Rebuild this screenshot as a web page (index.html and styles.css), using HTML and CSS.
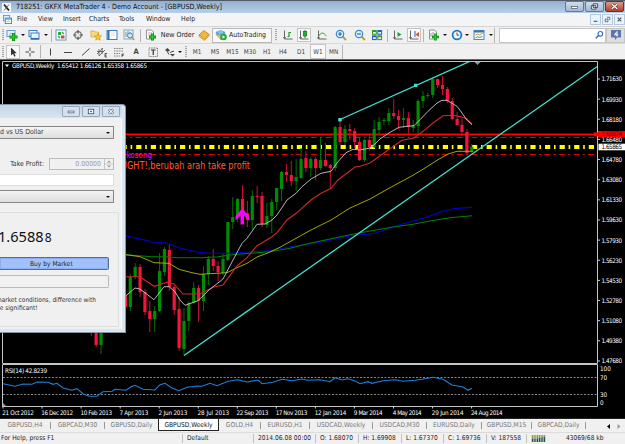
FILE: index.html
```html
<!DOCTYPE html>
<html lang="en">
<head>
  <meta charset="UTF-8">
  <title>GKFX MetaTrader 4</title>
  <link rel="stylesheet" href="styles.css">
</head>
<body>

<header class="titlebar">
  <svg class="app-icon" viewBox="0 0 9 9"><rect width="9" height="9" fill="#f8f8f8"/><path d="M2 1.5 L7 7.5" stroke="#222" stroke-width="1.8"/><path d="M7 1.5 L2 7.5" stroke="#444" stroke-width=".8"/></svg>
  <span class="title">718251: GKFX MetaTrader 4 - Demo Account - [GBPUSD,Weekly]</span>
  <div class="win-buttons">
    <span class="win-btn"><svg viewBox="0 0 18 10"><rect x="5.500" y="5" width="7" height="2" fill="#fff" stroke="#445" stroke-width=".7"/></svg></span>
    <span class="win-btn"><svg viewBox="0 0 18 10"><path d="M7.500 2h5v4h-5z M5.500 4h5v4h-5z" fill="#e8eef6" stroke="#445" stroke-width="1"/></svg></span>
    <span class="win-btn close"><svg viewBox="0 0 18 10"><path d="M6 2.500l6 5M12 2.500l-6 5" stroke="#533" stroke-width="3"/><path d="M6 2.500l6 5M12 2.500l-6 5" stroke="#fff" stroke-width="1.600"/></svg></span>
  </div>
</header>

<nav class="menubar">
  <svg class="menu-icon" viewBox="0 0 10 10"><rect x=".5" y=".5" width="7" height="6" fill="#dceefb" stroke="#5b9bd0"/><rect x="2.500" y="3.500" width="7" height="6" fill="#fff" stroke="#3f86c4"/><path d="M2.500 4.500h7" stroke="#3f86c4"/><path d="M4 7.500l2-1 2 1" stroke="#5a9" fill="none" stroke-width=".8"/></svg>
  <span>File</span><span>View</span><span>Insert</span><span>Charts</span><span>Tools</span><span>Window</span><span>Help</span>
  <div class="mdi-buttons">
    <span><svg viewBox="0 0 10 10"><path d="M3 7h4" stroke="#456" stroke-width="1.200"/></svg></span>
    <span><svg viewBox="0 0 10 10"><path d="M4.500 2.500h3v3M2.500 4.500h3v3h-3z" fill="none" stroke="#456" stroke-width=".9"/></svg></span>
    <span><svg viewBox="0 0 10 10"><path d="M3 3l4 4M7 3l-4 4" stroke="#456" stroke-width="1.200"/></svg></span>
  </div>
</nav>

<div class="toolbar main-tools">
  <i class="grip"></i>
  <svg viewBox="0 0 12 12"><rect x="1" y="1.500" width="8" height="6" fill="#e6f2fb" stroke="#5a9ccc"/><path d="M3 6l2-2 2 1" stroke="#888" fill="none" stroke-width=".7"/><path d="M7.500 4v8M3.500 8h8" stroke="#0a8a0a" stroke-width="3"/><path d="M7.500 4.600v6.800M4.200 8h6.600" stroke="#1fce2b" stroke-width="1.500"/></svg>
  <b class="arrow"></b>
  <svg viewBox="0 0 12 12"><rect x="1" y="1.500" width="8" height="6" fill="#f2f8fd" stroke="#3d7fbe"/><rect x="3" y="4" width="8" height="6" fill="#e4f0fa" stroke="#3d7fbe"/><path d="M3 9.800h8" stroke="#2d69a8" stroke-width="1.500"/></svg>
  <b class="arrow"></b>
  <i class="sep"></i>
  <svg viewBox="0 0 12 12"><rect x="1" y="1" width="10" height="10" fill="#fff" stroke="#5b9bd0"/><path d="M3 3h3v3h-3z" fill="#2fa838"/><path d="M6 6.500h3.500v3h-3.500z" fill="#e3432d"/><path d="M7 3l2 2M3 7l2 2" stroke="#2fa838" stroke-width="1.300"/></svg>
  <svg viewBox="0 0 12 12"><circle cx="6" cy="6" r="3.300" fill="none" stroke="#777" stroke-width="1.200"/><path d="M6 1v3.500M6 7.500v3.500M1 6h3.500M7.500 6h3.500" stroke="#555" stroke-width="1.200"/></svg>
  <svg viewBox="0 0 12 12"><path d="M1 2h3l1 1h3.500v5h-7.500z" fill="#f9dc79" stroke="#d2a02b" stroke-width=".7"/><path d="M8 4.500l1 2.300 2.600.2-2 1.600.7 2.600-2.300-1.400-2.300 1.400.7-2.600-2-1.600 2.600-.2z" fill="#fccc38" stroke="#c08a18" stroke-width=".6"/></svg>
  <svg viewBox="0 0 12 12"><rect x="1" y="1.500" width="10" height="9" fill="#fff" stroke="#3d7fbe"/><path d="M2.500 2v8" stroke="#2d6ab0" stroke-width="2"/><path d="M5 4h4M5 6h4" stroke="#f0c6a8" stroke-width=".7"/></svg>
  <svg viewBox="0 0 12 12"><rect x="1" y="1" width="9" height="9" fill="#e8f1f8" stroke="#8ab"/><path d="M3 3v5M5 2v5M7 3v3" stroke="#687" stroke-width=".8"/><circle cx="7" cy="6.500" r="2.500" fill="#cfe4f5" stroke="#4785bb"/><path d="M9 8.500l2.200 2.600" stroke="#c79a2b" stroke-width="1.500"/></svg>
  <i class="sep"></i>
  <svg viewBox="0 0 12 12"><path d="M1.500 1h5l2 2v7h-7z" fill="#fff" stroke="#777" stroke-width=".8"/><path d="M3 4h4M3 6h3" stroke="#999" stroke-width=".7"/><path d="M7.500 4.500v7M4 8h7" stroke="#0a8a0a" stroke-width="3"/><path d="M7.500 5v6M4.600 8h5.800" stroke="#1fce2b" stroke-width="1.400"/></svg>
  <span class="label">New Order</span>
  <svg viewBox="0 0 12 12"><path d="M1 6l5-4.500 5 4-4.500 5z" fill="#f4b93a" stroke="#b97a13" stroke-width=".8"/><path d="M1 6v1.500l5.500 4 4.500-4.500v-1.500l-4.500 5z" fill="#fff3c9" stroke="#b97a13" stroke-width=".6"/></svg>
  <span class="auto-btn">
    <svg viewBox="0 0 12 12"><path d="M1 5.500l5 5.500 4-4z" fill="#f2c84a" stroke="#b98b23" stroke-width=".5"/><ellipse cx="5.500" cy="4" rx="4.800" ry="2.200" fill="#5ba8d8"/><ellipse cx="5.500" cy="3" rx="2.600" ry="2" fill="#85c4e8"/><circle cx="8.500" cy="8" r="3.300" fill="#23a83c"/><path d="M7.500 6.300v3.400l2.700-1.700z" fill="#fff"/></svg>
    <span>AutoTrading</span>
  </span>
  <i class="grip"></i>
  <svg viewBox="0 0 12 12"><path d="M2.500 1.500v8.500h8M1 8.800h3" fill="none" stroke="#666"/><path d="M7 8V3M5.500 7.500h1.500M7 3.500h2" stroke="#1e9a2c" stroke-width="1.200"/></svg>
  <svg class="pressed" viewBox="0 0 12 12"><path d="M2.500 1.500v8.500h8M1 8.800h3" fill="none" stroke="#666"/><path d="M7 1v8" stroke="#168a24"/><rect x="5.300" y="2.500" width="3.400" height="4.500" fill="#23ad35" stroke="#0c7a1a" stroke-width=".7"/></svg>
  <svg viewBox="0 0 12 12"><path d="M2.500 1.500v8.500h8M1 8.800h3" fill="none" stroke="#666"/><path d="M2.500 7.500C5 3 7 3 10.500 7" fill="none" stroke="#3a9c46"/></svg>
  <svg viewBox="0 0 12 12"><path d="M7.500 7.500l3.500 3.500" stroke="#c99a25" stroke-width="2"/><circle cx="5" cy="5" r="3.700" fill="#d8effd" stroke="#3d8cc9" stroke-width="1.200"/><path d="M5 3v4M3 5h4" stroke="#2271b5" stroke-width="1.200"/></svg>
  <svg viewBox="0 0 12 12"><path d="M7.500 7.500l3.500 3.500" stroke="#c99a25" stroke-width="2"/><circle cx="5" cy="5" r="3.700" fill="#d8effd" stroke="#3d8cc9" stroke-width="1.200"/><path d="M3 5h4" stroke="#2271b5" stroke-width="1.200"/></svg>
  <svg viewBox="0 0 12 12"><rect x="1" y="1" width="4.800" height="4.800" fill="#2f9e2f"/><rect x="6.300" y="1" width="4.800" height="4.800" fill="#2c63bd"/><rect x="1" y="6.300" width="4.800" height="4.800" fill="#2c63bd"/><rect x="6.300" y="6.300" width="4.800" height="4.800" fill="#2f9e2f"/><path d="M2 3h2.800v1.800h-2.800zM7.300 3h2.800v1.800h-2.800zM2 8.300h2.800v1.800h-2.800zM7.300 8.300h2.800v1.800h-2.800z" fill="#e8f5ea"/></svg>
  <i class="sep"></i>
  <svg viewBox="0 0 12 12"><path d="M2.500 1.500v8.500h8M1 8.800h3" fill="none" stroke="#666"/><path d="M5.500 3v5l4-2.500z" fill="#1fa330"/></svg>
  <svg class="pressed" viewBox="0 0 12 12"><path d="M2.500 1.500v8.500h8M1 8.800h3" fill="none" stroke="#666"/><path d="M7 2v6" stroke="#2c63bd"/><path d="M11 3v5l-3.500-2.500z" fill="#d0502c"/></svg>
  <i class="sep"></i>
  <svg viewBox="0 0 12 12"><path d="M1.500 1h5l2 2v7h-7z" fill="#fff" stroke="#777" stroke-width=".8"/><path d="M3 4v4M5 3v4" stroke="#777" stroke-width=".8"/><path d="M7.500 4.500v7M4 8h7" stroke="#0a8a0a" stroke-width="2.600"/><path d="M7.500 5v6M4.600 8h5.800" stroke="#1fce2b" stroke-width="1.200"/></svg>
  <b class="arrow"></b>
  <svg viewBox="0 0 12 12"><circle cx="6" cy="6" r="4.400" fill="#eff8ff" stroke="#2478c8" stroke-width="1.800"/><path d="M6 3.500v2.700h2.200" fill="none" stroke="#444" stroke-width=".9"/></svg>
  <b class="arrow"></b>
  <svg viewBox="0 0 12 12"><rect x="1" y="1.500" width="10" height="9" fill="#f2f8fc" stroke="#4b8ac0"/><path d="M1 2.500h10" stroke="#3776b5" stroke-width="2"/><path d="M2.500 6l2-1 2 .8 3-1.300" fill="none" stroke="#d08a30" stroke-width=".9"/><path d="M2.500 8.800l2-1 2 .6 3-.9" fill="none" stroke="#3a9c46" stroke-width=".9"/></svg>
  <b class="arrow"></b>
  <i class="end"></i>
  <div class="search"><svg viewBox="0 0 12 12"><circle cx="7" cy="4.500" r="2.800" fill="#fff" stroke="#3c68c0" stroke-width="1.300"/><path d="M5 6.500l-3.500 3.500" stroke="#3c68c0" stroke-width="1.800"/></svg></div>
  <div class="chat"><svg viewBox="0 0 12 12"><path d="M1 1h10v7.500h-4l-1.500 2.500-1-2.500h-3.500z" fill="#5a76ac"/><path d="M7 7.500V2.500L4.500 5.800h3.700" stroke="#fff" fill="none"/></svg></div>
</div>

<div class="toolbar line-tools">
  <i class="grip"></i>
  <svg class="pressed" viewBox="0 0 12 12"><path d="M4 1.500v8l2-1.800 1.300 3 1.300-.6-1.300-2.900h2.500z" fill="#333"/></svg>
  <svg viewBox="0 0 12 12"><path d="M6 1.500v3.500M6 7v3.500M1.500 6h3.500M7 6h3.500" stroke="#444"/></svg>
  <i class="sep"></i>
  <svg viewBox="0 0 12 12"><path d="M6.500 2.500v7" stroke="#444"/></svg>
  <svg viewBox="0 0 12 12"><path d="M2 6.500h8" stroke="#444"/></svg>
  <svg viewBox="0 0 12 12"><path d="M2 9.500l7.500-7" stroke="#444"/></svg>
  <svg viewBox="0 0 12 12"><path d="M1 8l6-6M3 10l6-6M1 5.500h7M3 3v7M6 2v6" stroke="#555" stroke-width=".8"/><path d="M11 7.500H9v3.500h2M9 9.200h1.600" stroke="#333" fill="none" stroke-width=".8"/></svg>
  <svg viewBox="0 0 12 12"><path d="M1 2.500h9M1 5h9M1 7.500h6M1 10h6" stroke="#777" stroke-dasharray="1 .6"/><path d="M9 11V8h2M9 9.500h1.500" stroke="#333" fill="none" stroke-width=".8"/></svg>
  <span class="tool-a">A</span>
  <svg viewBox="0 0 12 12"><rect x="2" y="2" width="8.500" height="8.500" fill="none" stroke="#777" stroke-dasharray="1 .7"/><path d="M4 4h4.500M6.250 4v5" stroke="#333" stroke-width="1.200"/></svg>
  <svg viewBox="0 0 12 12"><path d="M1 4l2.500-2L6 4.500 3.500 6zM6 8h5l-2.500 2.500z" fill="#444"/><path d="M3.500 6l1.500 2.500M6 6.500l4-1.500" stroke="#444"/></svg>
  <b class="arrow"></b>
  <i class="grip"></i>
  <span>M1</span><span>M5</span><span>M15</span><span>M30</span><span>H1</span><span>H4</span><span>D1</span><span class="pressed">W1</span><span class="last">MN</span>
</div>

<main class="workspace">
  <svg id="chart" class="chart" viewBox="0 59 625 359">
    <defs><clipPath id="plot"><rect x="3" y="62" width="594.500" height="301"/></clipPath></defs>
    <path d="M0 59.500H625" stroke="#666"/>
    <g clip-path="url(#plot)">
      <path d="M121 134.300H598" stroke="#f00" stroke-width="1.800"/>
      <path d="M121 137.500H598M121 154.500H598" class="dashdot"/>
      <path d="M121.600 147H598" class="bid"/>
      <g id="candles"></g>
      <g id="averages"></g>
      <path d="M340 119.500L476 58.600M184 355.500L598 66" class="trend"/>
      <path d="M338.300 118h3.400v3.400h-3.400zM414 83.700h3.400v3.400h-3.400z" fill="#40e0d0"/>
      <path d="M240.500 224.500v-9l-5 5v-4.500l6.700-7.500 6.800 7.500v4.500l-5-5v9z" fill="#f0f"/>
      <path d="M474.500 62h6l-3 3z" fill="#8295ad"/>
    </g>
    <g class="frame">
      <path d="M2.500 363V61.500H597.500V363.500H2.500M2.500 406.500V364.500H597.500V406.500H2.500"/>
    </g>
    <path d="M3 377.500H597M3 394.500H597" class="level"/>
    <g id="rsi"></g>
    <path d="M3 406v-3l3 3z" fill="#8295ad"/>
    <path d="M5 64.500h4l-2 2.500z" fill="#fff"/>
    <text x="12" y="67.800" textLength="135" class="small">GBPUSD,Weekly  1.65412 1.66126 1.65358 1.65865</text>
    <text x="5" y="372.500" textLength="42" class="small">RSI(14) 42.8239</text>
    <text x="126.500" y="158" textLength="25.500" class="note-pink">kosong</text>
    <text x="121" y="168.600" textLength="129" lengthAdjust="spacingAndGlyphs" class="note-red">UGHT!,berubah arah take profit</text>
    <g id="axis"></g>
    <path d="M598 131h27v6.200h-27z" fill="#f00"/><path d="M594 132.300h4v4h-4z" fill="#f00"/>
    <text x="601.500" y="136.400" textLength="20.500" class="small alert-price">1.66974</text>
    <path d="M598.500 143.700h26.500v6.600h-26.500z" fill="#fff"/>
    <text x="601.500" y="149.400" textLength="20.500" class="small bid-price">1.65865</text>
  </svg>

  <section class="dialog">
    <div class="dialog-title">
      <span><svg viewBox="0 0 18 10"><rect x="5.800" y="4.500" width="6.500" height="2" fill="#fff" stroke="#556" stroke-width=".8"/></svg></span>
      <span><svg viewBox="0 0 18 10"><rect x="6" y="2.500" width="6" height="5" fill="#fff" stroke="#556"/><rect x="8" y="4.300" width="2" height="1.400" fill="#556"/></svg></span>
      <span><svg viewBox="0 0 18 10"><path d="M6.500 2.500l5 5M11.500 2.500l-5 5" stroke="#556" stroke-width="2.600"/><path d="M6.500 2.500l5 5M11.500 2.500l-5 5" stroke="#fff" stroke-width="1.200"/></svg></span>
    </div>
    <div class="dialog-body">
      <div class="select"><span>d vs US Dollar</span><b class="arrow"></b></div>
      <div class="profit"><label>Take Profit:</label><div class="spin"><span>0.00000</span><i><svg viewBox="0 0 8 10"><path d="M4 1.500l2 2h-4zM4 8.500l2-2h-4z" fill="#999"/><path d="M0 5h8" stroke="#bbb" stroke-width=".7"/></svg></i></div></div>
      <div class="input"></div>
      <div class="select second"><b class="arrow"></b></div>
      <div class="order">
        <div class="price">1.6588<small>8</small></div>
        <div class="buy">Buy by Market</div>
        <div class="empty-btn"></div>
        <p>market conditions, difference with<br>be significant!</p>
      </div>
    </div>
  </section>
</main>

<div class="tabs">
  <span>GBPUSD,H4</span><span>GBPCAD,M30</span><span>GBPUSD,Daily</span><span class="active">GBPUSD,Weekly</span><span>GOLD,H4</span><span>EURUSD,H1</span><span>USDCAD,Weekly</span><span>USDCAD,M30</span><span>EURUSD,Daily</span><span>GBPUSD,M15</span><span>GBPCAD,Daily</span>
  <svg viewBox="0 0 39 12"><path d="M24 4v5l-3-2.500z" fill="#000"/><path d="M31.500 4v5l3-2.500z" fill="#999"/></svg>
</div>

<footer class="status">
  <span>For Help, press F1</span><span>Default</span><span>2014.06.08 00:00</span><span>O: 1.68070</span><span>H: 1.69908</span><span>L: 1.67370</span><span>C: 1.69736</span><span>V: 187558</span>
  <span><svg viewBox="0 0 16 8"><path d="M1 0v4M3 0v4M5 0v4M7 0v4M9 0v3M11 0v3M13 0v2M15 0v2" stroke="#8a9a1c" stroke-width="1.300"/><path d="M1 4v4M3 4v4M5 4v4M7 4v4M9 3v5M11 3v5M13 2v6M15 2v6" stroke="#1e4a50" stroke-width="1.300"/></svg></span>
  <span class="traffic">43069/68 kb</span>
</footer>

<script src="chart.js"></script>
</body>
</html>
```
FILE: styles.css
```css
* { box-sizing: border-box; }
body {
  margin: 0;
  width: 625px;
  height: 444px;
  overflow: hidden;
  background: #f0f0f0;
  font-family: "DejaVu Sans Condensed", "DejaVu Sans", sans-serif;
  font-stretch: condensed;
  font-size: 6.9px;
  line-height: 1;
  color: #222;
  white-space: nowrap;
}
svg { display: block; }

.titlebar {
  height: 13px;
  display: flex;
  align-items: center;
  padding-left: 2px;
  border-top: 1px solid #515b68;
  background: linear-gradient(#94afce, #b7cfe9);
}
.app-icon { width: 9px; height: 9px; }
.title { margin-left: 5px; font-size: 7.1px; color: #111; }
.win-buttons { display: flex; margin-left: auto; margin-right: 1px; height: 12px; padding-bottom: 1px; gap: 1px; }
.win-btn {
  width: 19px;
  border: 1px solid #66788f;
  border-radius: 2px;
  background: linear-gradient(#cfdeee, #a3b9d2);
}
.win-btn svg { width: 100%; height: 9px; }
.win-btn.close { background: linear-gradient(#e29a8d, #b5402c); border-color: #6b3030; }

.menubar {
  height: 13px;
  display: grid;
  grid-template-columns: 14px 21px 25px 26px 30px 27px 35px 30px 1fr;
  align-items: center;
  padding-left: 3px;
  background: #f3f4f5;
}
.menu-icon { width: 9px; height: 9px; }
.mdi-buttons { display: flex; justify-content: flex-end; height: 11px; gap: 1px; }
.mdi-buttons span { width: 11px; border: 1px solid #b5c9dd; background: #eaf2fa; }
.mdi-buttons svg { height: 9px; width: 9px; }

.toolbar { display: grid; align-items: center; justify-items: center; background: #f0f0f0; }
.toolbar svg { width: 12px; height: 12px; }
.main-tools {
  height: 17px;
  border-top: 1px solid #d5d5d5;
  grid-template-columns: 5px 14px 7px 16px 7px 4px 16px 18px 17px 16px 18px 4px 17px 37px 16px 60px 7px 17px 16px 19px 20px 17px 17px 5px 15px 17px 3px 17px 6px 17px 4px 19px 5px 6px 107px 19px;
}
.line-tools {
  height: 16px;
  border-top: 1px solid #d9d9d9;
  grid-template-columns: 5px 15px 19px 2px 18px 18px 17px 16px 18px 16px 18px 15px 6px 6px 16px 20px 15px 20px 14px 18px 18px 16px 17px;
  font-size: 6.4px;
  color: #444;
}
.line-tools span { padding-top: 1px; }
.grip { width: 2px; height: 12px; background: repeating-linear-gradient(#aaa 0 1px, #e8e8e8 1px 2px); }
.sep { width: 1px; height: 13px; background: #b4b4b4; }
.end { width: 1px; height: 15px; background: #b4b4b4; justify-self: start; margin-left: 1px; }
.arrow { width: 0; height: 0; border: 2px solid transparent; border-top-color: #111; border-bottom: 0; }
.toolbar .pressed { background: #f9f9f9; outline: 1px solid #c4c4c4; }
.line-tools span.pressed { padding: 4px 2px 3px; }
.line-tools .last { width: 100%; height: 14px; padding: 4px 3px; border-right: 1px solid #b4b4b4; }
.line-tools .tool-a { font-size: 7.5px; font-weight: bold; }
.label { font-size: 7px; }
.auto-btn {
  width: 60px;
  height: 15px;
  display: flex;
  align-items: center;
  padding-left: 2px;
  gap: 2px;
  border: 1px solid #b9b9b9;
  background: #f8f8f8;
  font-size: 6.9px;
}
.search { width: 107px; height: 15px; background: #fff; border: 1px solid #c6c6c6; display: flex; align-items: center; justify-content: flex-end; }
.search svg { width: 11px; height: 10px; }
.chat { width: 19px; height: 15px; background: #dedede; border: 1px solid #c6c6c6; display: flex; align-items: center; justify-content: center; }

.workspace { position: relative; height: 359px; background: #000; }
.chart { width: 625px; height: 359px; }
.frame path { fill: none; stroke: #c4c4c4; stroke-width: 1; }
.dashdot { stroke: #e00000; stroke-width: 1; stroke-dasharray: 6 3.200 2 3.400; }
.bid { stroke: #ff0; stroke-width: 4; stroke-dasharray: 5.200 3.800 1.600 4; }
.trend { stroke: #40e0d0; stroke-width: 1.3; }
.level { stroke: #aaa; stroke-width: .8; stroke-dasharray: 2 1.500; }
.small { font-size: 6.3px; fill: #fff; white-space: pre; }
.alert-price { fill: #600; }
.bid-price { fill: #000; }
.note-pink { font-size: 8px; fill: #f0f; }
.note-red { font-size: 9.8px; fill: #ff5a36; }

.dialog {
  position: absolute;
  left: 0;
  top: 45px;
  width: 126px;
  height: 229px;
  padding-right: 3px;
  border: 1px solid #8795a5;
  border-left: 0;
  border-radius: 0 4px 0 0;
  background: #d9e5f1;
}
.dialog-title { height: 13px; display: flex; justify-content: flex-end; padding: 1px 2px 0 0; gap: 2px; background: linear-gradient(#c2d3e5, #d9e5f1); }
.dialog-title span { width: 18px; height: 11px; border: 1px solid #96a7ba; border-radius: 1px; background: #d3e0ed; }
.dialog-title svg { width: 16px; height: 9px; }
.dialog-body { height: 211px; background: #f0f0f0; border-right: 1px solid #f9f9f9; padding-top: 8px; color: #333; }
.select {
  width: 114px;
  height: 13px;
  display: flex;
  align-items: center;
  justify-content: space-between;
  padding-right: 3px;
  border: 1px solid #858585;
  border-left: 0;
  background: linear-gradient(#f4f4f4, #dedede);
}
.select.second { margin-top: 4px; justify-content: flex-end; }
.profit { width: 114px; margin-top: 19px; display: flex; align-items: center; justify-content: flex-end; gap: 5px; }
.spin { width: 65px; height: 12px; display: flex; align-items: center; justify-content: flex-end; gap: 3px; border: 1px solid #bcbcbc; color: #999; }
.spin i { width: 9px; height: 10px; border-left: 1px solid #c4c4c4; }
.input { width: 114px; height: 12px; margin-top: 4px; background: #fff; border: 1px solid #ddd; border-left: 0; }
.order { width: 119px; height: 115px; margin-top: 9px; border: 1px solid #dcdfe2; border-left: 0; border-radius: 0 2px 2px 0; }
.price { margin: 15px 0 0 -2px; height: 29px; font-family: "Noto Sans", sans-serif; font-stretch: normal; font-size: 14.600px; line-height: 17px; color: #111; }
.price small { font-size: 12px; margin-left: 1px; }
.buy { width: 109px; height: 13px; padding: 3px 0 0 30px; border: 1px solid #596e8e; border-radius: 0 2px 2px 0; border-left: 0; background: #a2c1fb; box-shadow: inset 0 0 0 1px #8bacf0; color: #223; font-size: 6.600px; }
.empty-btn { width: 109px; height: 13px; margin-top: 5px; border: 1px solid #b9b9b9; border-left: 0; border-radius: 0 2px 2px 0; background: #f1f1f1; }
.order p { margin: 8px 0 0 -4px; font-size: 6.500px; line-height: 8.300px; }

.tabs {
  height: 14px;
  display: grid;
  grid-template-columns: 51px 54px 53px 61px 42px 49px 63px 54px 55px 50px 54px 39px;
  align-items: center;
  border-top: 1px solid #222;
  background: #f0f0f0;
  color: #777;
  font-size: 6.6px;
}
.tabs span { height: 7px; border-right: 1px solid #999; text-align: center; }
.tabs span:nth-child(3) { border: 0; }
.tabs .active { height: 12px; margin-bottom: 1px; padding-top: 3px; background: #fff; border: 1px solid #222; border-top: 0; color: #111; }
.tabs svg { width: 39px; height: 12px; }

.status {
  height: 12px;
  display: grid;
  grid-template-columns: 182px 71px 62px 43px 43px 42px 43px 40px 31px 68px;
  align-items: center;
  border-top: 1px solid #dcdcdc;
  background: #f0f0f0;
  font-size: 6.6px;
}
.status span { height: 9px; padding: 1px 0 0 4px; border-left: 1px solid #c2c2c2; }
.status span:first-child, .status .traffic { border: 0; padding-left: 1px; }
.status .traffic { padding-left: 9px; }
.status svg { width: 15px; height: 7px; }
```
FILE: chart.js
```js
const NS = 'http://www.w3.org/2000/svg';
const STEP = 4.878;
const FIRST_X = 130.3;

// colour, high, body top, body bottom, low
const candles = [
  ['g',274,277,307,311], ['g',263,267,277,279], ['r',264,267,292,297], ['r',289,292,312,315],
  ['r',301,311,319,332], ['g',306,311,319,332], ['g',253,271,311,312], ['g',247,249,272,276],
  ['r',245,250,287,291], ['r',285,287,310,315], ['r',297,309,348,351], ['g',308,321,349,355],
  ['g',301,303,321,331], ['g',282,288,303,304], ['r',285,288,301,322], ['g',266,274,301,311],
  ['g',256,259,274,285], ['r',249,259,266,271], ['r',261,266,272,281], ['g',254,259,273,275],
  ['g',222,222,260,261], ['g',197,217,222,229], ['g',198,199,217,222], ['r',185,199,213,222],
  ['r',201,213,220,227], ['g',190,196,220,230], ['r',186,196,197,203], ['r',192,196,224,227],
  ['g',203,216,225,228], ['g',199,202,216,233], ['g',188,188,202,210], ['g',171,172,189,201],
  ['r',164,172,175,182], ['r',161,175,181,186], ['g',159,177,181,191], ['g',148,159,178,179],
  ['r',151,158,168,172], ['g',157,159,168,177], ['r',157,159,168,180], ['g',137,160,168,170],
  ['r',143,160,166,167], ['r',164,165,168,188], ['g',126,127,168,171], ['r',120,127,142,145],
  ['g',125,129,142,145], ['r',124,129,131,140], ['r',128,131,142,148], ['r',138,142,160,161],
  ['g',139,140,160,162], ['r',134,140,147,151], ['g',120,129,147,148], ['g',117,122,130,136],
  ['g',118,120,121,125], ['g',108,113,121,125], ['r',99,113,116,119], ['r',110,116,120,129],
  ['g',108,118,120,128], ['r',112,118,127,134], ['g',120,125,128,132], ['g',99,101,126,134],
  ['g',91,96,101,108], ['g',93,95,96,98], ['g',77,79,95,98], ['r',79,79,85,88],
  ['r',76,85,89,95], ['r',87,89,101,103], ['r',98,101,119,120], ['r',112,119,125,126],
  ['r',118,125,132,136], ['r',129,132,153,155], ['g',144,147,151,153]
];
// bars that show around the order window
const early = [[-8,'r',325,326,327,336], [-7,'r',320,325,345,347], [-6,'g',320,325,345,354], [-1,'r',290,295,307,309]];

const averages = [
  ['#0000e0', '126,236 142,239.300 154,242.700 165,242.700 179,247.700 195,251.700 208,253.300 232,253.300 248,252 270,250.700 290,246.700 317,242.700 350,236 375,233.300 393,226.700 417,220 430,216 442,211.500 455,208.500 472,207.400'],
  ['#008000', '126,254.700 152,256.700 165,256.700 178,257.700 202,257.700 218,256.700 232,254.700 250,253.300 270,251.700 290,248.300 310,243.300 330,239 350,234.700 370,231 393,227 413,224.300 430,221 450,217.800 472,215.800'],
  ['#b8b800', '126,254.700 140,256.700 154,262.700 169,263.300 179,269.300 192,272.700 200,274.300 227,272.700 237,267.700 247,263.300 257,257 267,253.300 280,247.300 293,240 311,230 331,220 350,208 370,199 390,187.700 413,175.300 425,168 437,160.300 448,154 457,151.300 473,151.300', 0.9],
  ['#d02828', '126,276.700 140,276.700 154,286.300 167,282.300 174,284 183,294 200,294 213,287.300 223,285 237,266 247,257.700 257,245.700 263,242.300 272,236.700 277,232.700 287,220 296,213.300 311,200 321,193.300 331,188.300 338,180 355,167 360,166.300 370,163 387,150.700 402,140.300 414,138 423,131.300 433,123 443,115.700 453,115.300 462,117 467,119 472,124'],
  ['#c8c8c8', '126,295.700 135,288 140,289 154,299.700 164,286.700 169,286.700 175,291.700 180,300 185,305.300 198,300.700 209,290 223,279 233,260 242,243.300 247,238.300 257,224.300 265,224 272,220 277,215 287,200 296,193.300 302,186.700 311,179 321,173.300 331,171.300 338,161.700 346,152.700 353,149.300 360,150 370,148 375,144 380,139 390,132.300 399,127.300 407,126.300 414,125.700 420,119.700 428,111.300 437,103 442,100.300 447,100.300 452,103.300 457,106.300 462,113 467,120.300 472,124.700', 0.9]
];

const rsi = '3,383.700 15,386.300 23,384 32,384.300 37,382 48,382.300 53,384.300 57,383.300 63,388 72,390.300 77,388.700 83,393.700 89,396.300 97,396.300 103,391.700 112,391.300 115,389.300 126,390.300 131,386.700 135,385.300 143,389.300 155,390 160,384.700 165,383.300 172,388 179,390.700 187,387.300 197,386 202,386.300 210,383.300 217,385.700 228,381.300 238,379.700 247,382 258,380 262,383.700 273,382.300 282,379.300 292,380.700 302,379 308,380.300 320,379.700 330,381.700 335,377.700 342,380 348,378.700 355,381 360,383.700 368,381.700 372,383.300 383,380.700 395,379.700 403,381.300 415,380.300 422,379.300 433,377.300 443,379.300 452,385 463,387 468,390.300 472,388.300';

const prices = ['1.71630','1.69930','1.68180','1.66480','1.64780','1.63080','1.61330','1.59630','1.57930','1.56230','1.54530','1.52780','1.51080','1.49380','1.47680'];
const dates = ['21 Oct 2012','16 Dec 2012','10 Feb 2013','7 Apr 2013','2 Jun 2013','28 Jul 2013','22 Sep 2013','17 Nov 2013','12 Jan 2014','9 Mar 2014','4 May 2014','29 Jun 2014','24 Aug 2014'];

function add(parent, tag, attrs, text) {
  const el = document.createElementNS(NS, tag);
  for (const key in attrs) el.setAttribute(key, attrs[key]);
  if (text) el.textContent = text;
  document.getElementById(parent).appendChild(el);
}

function drawCandle(i, [color, high, top, bottom, low]) {
  const x = FIRST_X + i * STEP;
  const fill = color === 'g' ? '#008c00' : '#f5143c';
  const dim = color === 'g' ? '#007000' : '#c81034';
  add('candles', 'rect', { x: x - 0.5, y: high, width: 1, height: low - high, fill: dim });
  add('candles', 'rect', { x: x - 1.6, y: top, width: 3.2, height: Math.max(bottom - top, 1), fill: fill });
}

candles.forEach((c, i) => drawCandle(i, c));
early.forEach(([i, ...c]) => drawCandle(i, c));

averages.forEach(([stroke, points, width = 1.1]) => {
  add('averages', 'polyline', { points, stroke, fill: 'none', 'stroke-width': width });
});
add('rsi', 'polyline', { points: rsi, stroke: '#1e80dc', fill: 'none', 'stroke-width': 1.1 });

prices.forEach((p, i) => {
  const y = 79 + i * 20.14;
  add('axis', 'path', { d: `M598 ${y}h2`, stroke: '#ccc' });
  add('axis', 'text', { x: 601.5, y: y + 2.4, textLength: 20.5, class: 'small' }, p);
});
[['100', 369], ['70', 377.5], ['30', 394.2], ['0', 403]].forEach(([t, y]) => {
  add('axis', 'text', { x: 600, y: y + 2.4, class: 'small' }, t);
});
dates.forEach((d, i) => {
  const x = 3 + i * 39.05;
  add('axis', 'path', { d: `M${x} 406v2.500`, stroke: '#ccc' });
  add('axis', 'text', { x: x - 0.7, y: 414.8, textLength: d.length * 2.88, class: 'small' }, d);
});
```
